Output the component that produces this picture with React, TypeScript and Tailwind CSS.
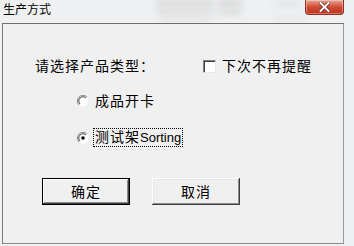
import React from "react";

const FONT = { fontFamily: '"Liberation Sans", "Noto Sans CJK SC", sans-serif' };

function Radio({ checked }: { checked?: boolean }) {
  return (
    <svg width="12" height="12" viewBox="0 0 12 12" className="shrink-0">
      <circle cx="6" cy="6" r="5.5" fill="#ffffff" />
      <path d="M10 2 A5.5 5.5 0 0 0 2 10" fill="none" stroke="#8a8a8a" strokeWidth="1" />
      <path d="M9 3 A4.2 4.2 0 0 0 3 9" fill="none" stroke="#404040" strokeWidth="1" />
      <path d="M2 10 A5.5 5.5 0 0 0 10 2" fill="none" stroke="#f4f4f4" strokeWidth="1" />
      {checked && <circle cx="6" cy="6" r="1.8" fill="#000000" />}
    </svg>
  );
}

function Checkbox() {
  return (
    <div className="w-[13px] h-[13px] shrink-0 bg-white border border-t-[#808080] border-l-[#808080] border-r-[#e8e8e8] border-b-[#e8e8e8] shadow-[inset_1px_1px_#404040]" />
  );
}

function Button({ label, primary }: { label: string; primary?: boolean }) {
  return (
    <button
      className={
        "w-[88px] h-[27px] bg-[#f0f0f0] text-[14px] leading-[16px] tracking-[1px] text-black flex items-center justify-center " +
        (primary
          ? "border border-black shadow-[inset_-1px_-1px_#404040,inset_1px_1px_#ffffff,inset_-2px_-2px_#8a8a8a]"
          : "shadow-[inset_-1px_-1px_#404040,inset_1px_1px_#ffffff,inset_-2px_-2px_#8a8a8a,inset_2px_2px_#e6e6e6]")
      }
    >
      {label}
    </button>
  );
}

export default function App() {
  return (
    <div className="relative w-[354px] h-[246px] bg-[#eef0f2] overflow-hidden" style={FONT}>
      {/* blurred desktop behind the glass title bar */}
      <div className="absolute inset-x-0 top-0 h-[23px] overflow-hidden">
        <div className="absolute left-[157px] top-[1px] w-[56px] h-[5px] bg-[#d4d4d4] blur-[3px]" />
        <div className="absolute left-[157px] top-[9px] w-[56px] h-[5px] bg-[#dadada] blur-[3px]" />
        <div className="absolute left-[218px] top-[1px] w-[24px] h-[5px] bg-[#d2d2d2] blur-[3px]" />
        <div className="absolute left-[218px] top-[9px] w-[24px] h-[5px] bg-[#d8d8d8] blur-[3px]" />
        <div className="absolute left-[274px] top-[2px] w-[28px] h-[4px] bg-[#e0e0e0] blur-[3px]" />
        <div className="absolute left-[160px] top-[18px] w-[50px] h-[3px] bg-[#dddddd] blur-[3px]" />
        <div className="absolute left-[275px] top-[18px] w-[30px] h-[3px] bg-[#e3e3e3] blur-[3px]" />
      </div>

      {/* title bar */}
      <div className="relative h-[23px] flex items-start">
        <span className="pl-[3px] pt-[3px] text-[12px] leading-[14px] text-black">生产方式</span>
        <div className="absolute right-[10px] top-0 w-[39px] h-[15px] rounded-b-[4px] border border-t-0 border-[#8a2e22] bg-gradient-to-b from-[#e8a495] via-[#cf4b33] to-[#c0301c] flex items-center justify-center shadow-[inset_0_0_0_1px_rgba(255,255,255,0.35)]">
          <svg width="11" height="10" viewBox="0 0 11 10">
            <path d="M1.5 1 L9.5 9 M9.5 1 L1.5 9" stroke="#5a1a10" strokeWidth="3.2" strokeLinecap="square" />
            <path d="M1.5 1 L9.5 9 M9.5 1 L1.5 9" stroke="#ffffff" strokeWidth="2" strokeLinecap="square" />
          </svg>
        </div>
      </div>

      {/* client area */}
      <div className="ml-[2px] w-[342px] h-[221px] bg-[#f0f0f0] border border-t-[#6e6e6e] border-l-[#7a7a7a] border-r-[#9a9a9a] border-b-[#8a8a8a] text-[14px] leading-[16px] text-black">
        <div className="flex flex-col pl-[32px] pt-[34px]">
          <div className="flex items-center">
            <span className="w-[168px] tracking-[1px]">请选择产品类型：</span>
            <Checkbox />
            <span className="ml-[6px] tracking-[1px]">下次不再提醒</span>
          </div>

          <div className="flex items-center mt-[19px] ml-[42px]">
            <Radio />
            <span className="ml-[6px] tracking-[1px]">成品开卡</span>
          </div>

          <div className="flex items-center mt-[20px] ml-[42px]">
            <Radio checked />
            <span className="ml-[5px] px-[1px] outline outline-1 outline-dotted outline-black">
              <span className="tracking-[1px]">测试架</span>
              <span className="text-[13px]">Sorting</span>
            </span>
          </div>

          <div className="flex gap-[22px] mt-[32px] ml-[7px]">
            <Button label="确定" primary />
            <Button label="取消" />
          </div>
        </div>
      </div>
    </div>
  );
}
